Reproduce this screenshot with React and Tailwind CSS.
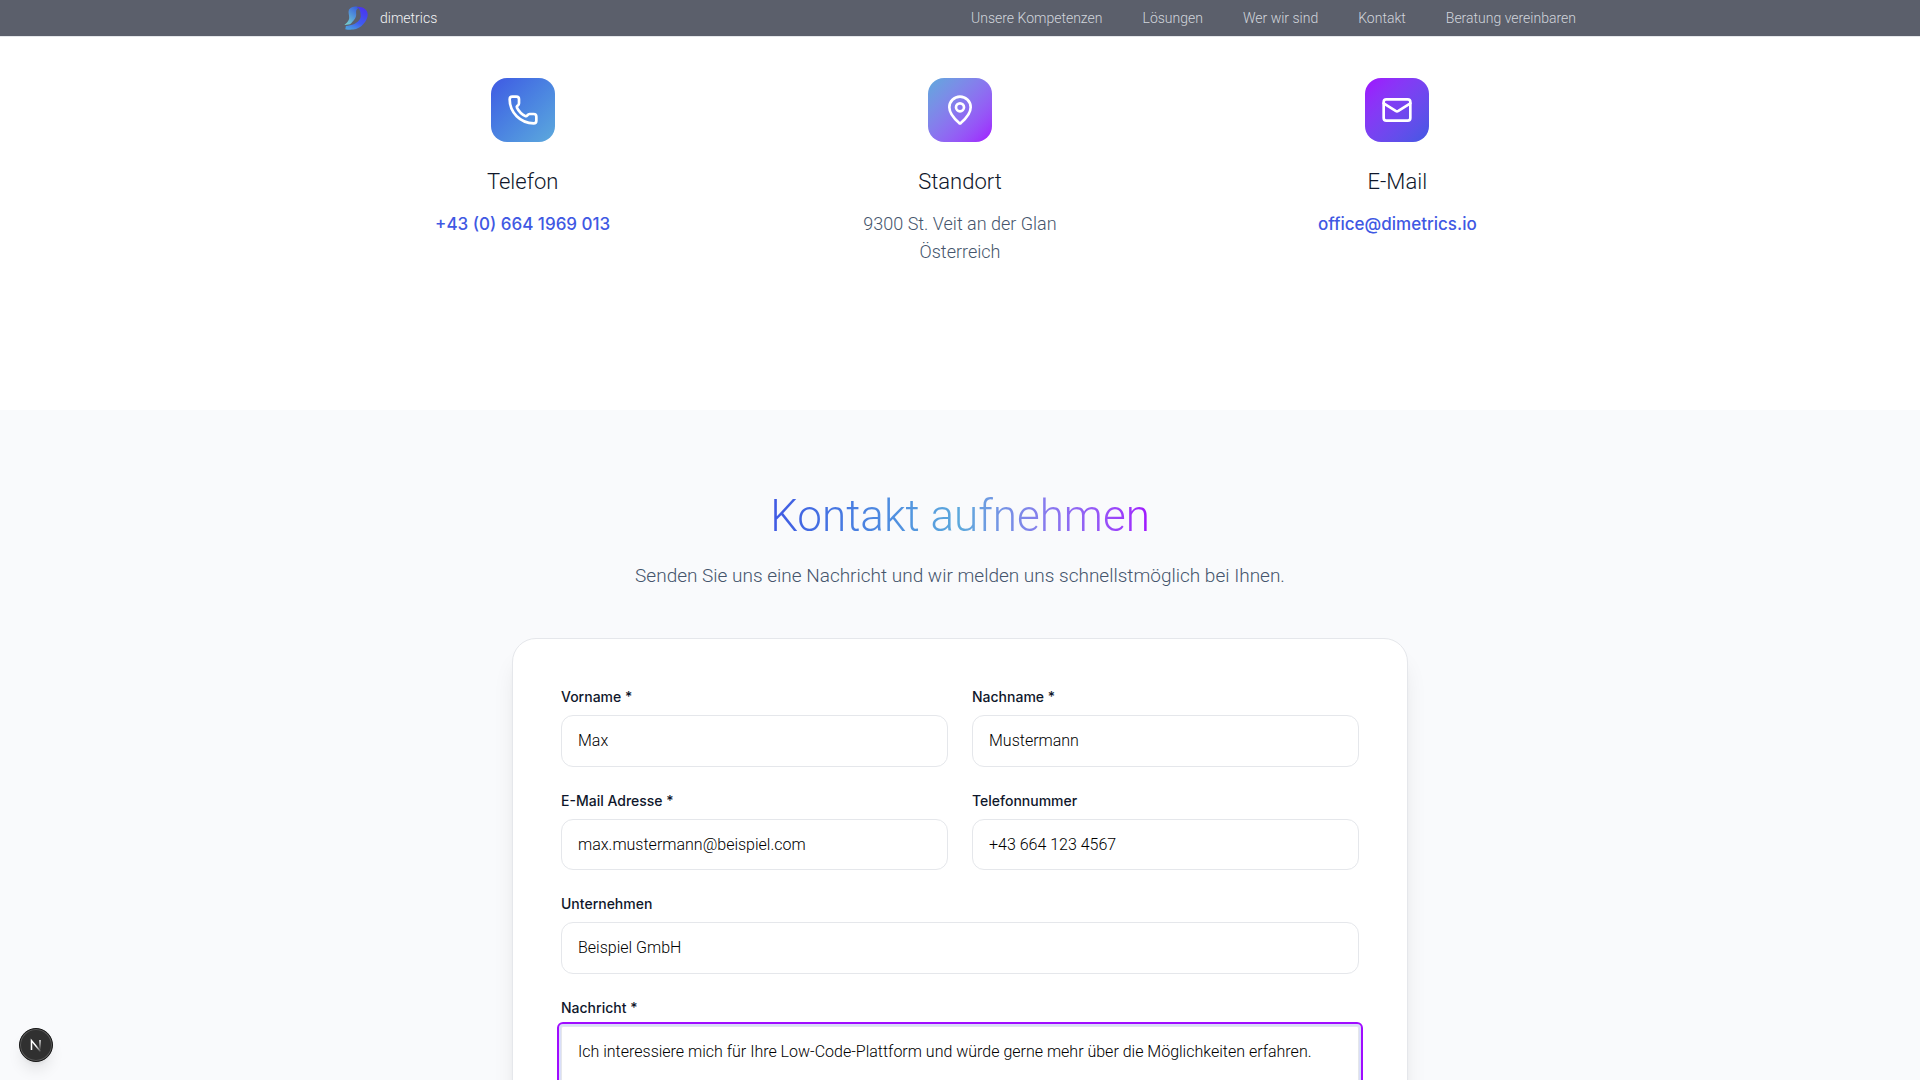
import { useId } from "react";
import { Mail, MapPin, Phone } from "lucide-react";

const navItems = [
  "Unsere Kompetenzen",
  "Lösungen",
  "Wer wir sind",
  "Kontakt",
  "Beratung vereinbaren",
];

function Logo() {
  return (
    <svg viewBox="0 0 24 24" className="size-6" aria-hidden="true">
      <defs>
        <linearGradient id="logo-right" x1="0.7" y1="0" x2="0.3" y2="1">
          <stop offset="0" stopColor="#4a33f0" />
          <stop offset="0.65" stopColor="#3f5cf0" />
          <stop offset="1" stopColor="#4a9be0" />
        </linearGradient>
        <linearGradient id="logo-left" x1="0.8" y1="0" x2="0.2" y2="1">
          <stop offset="0" stopColor="#3a62dc" />
          <stop offset="0.5" stopColor="#5599d8" />
          <stop offset="1" stopColor="#76d0d0" />
        </linearGradient>
      </defs>
      <path
        d="M5 3.400C7 1.200 10 .1 13.400.7L14 2.400C11.500 3.800 12.200 6 12.200 8.200c0 4.300-2.800 6.300-4.700 8.700L6 18.200.5 18.900C2 17.300 4.900 15.600 5.200 12 5.400 9 3.800 6.500 5 3.400z"
        fill="url(#logo-left)"
      />
      <path
        d="M12.700.8C18.500.5 23.500 3.300 23.700 8.200c.2 6.500-6.700 14.600-14.500 15.400-2.800.3-5.800.2-7.900-.4l.6-3.300c2.700-.6 5.700-.5 8.500-2 3-1.600 6.400-4.500 6.300-7.700C16.600 6.500 16.400 3.200 12.700.8z"
        fill="url(#logo-right)"
      />
    </svg>
  );
}

function ContactItem({ title, tile, icon: Icon, children }) {
  return (
    <div className="flex flex-col items-center text-center">
      <div className={`flex size-16 items-center justify-center rounded-2xl bg-linear-to-br ${tile}`}>
        <Icon className="size-8 text-white" strokeWidth={2} aria-hidden="true" />
      </div>
      <h3 className="mt-6 mb-3 text-[22px] leading-8 font-light text-slate-900">{title}</h3>
      <div className="text-lg leading-7 font-light text-slate-600">{children}</div>
    </div>
  );
}

function ContactLink({ href, children }) {
  return (
    <a href={href} className="font-['Inter',sans-serif] text-[17px] font-medium text-[#4058e3]">
      {children}
    </a>
  );
}

function Label({ htmlFor, children }) {
  return (
    <label
      htmlFor={htmlFor}
      className="mb-2 block font-['Inter',sans-serif] text-sm font-medium text-slate-900"
    >
      {children}
    </label>
  );
}

function Field({ label, value, type = "text", className = "" }) {
  const id = useId();
  return (
    <div className={className}>
      <Label htmlFor={id}>{label}</Label>
      <input
        id={id}
        type={type}
        defaultValue={value}
        className="block w-full rounded-xl border border-gray-200 bg-white px-4 py-3 text-base leading-[1.6] font-light text-black"
      />
    </div>
  );
}

export default function App() {
  return (
    <div className="min-h-screen bg-white font-['Roboto',sans-serif] font-light antialiased">
      <header className="sticky top-0 z-10 border-b border-gray-200 bg-[#5b5f6b]">
        <div className="mx-auto flex h-9 max-w-7xl items-center justify-between px-6">
          <a href="#start" className="flex items-center gap-3 text-sm font-light text-gray-100">
            <Logo />
            dimetrics
          </a>
          <nav className="flex gap-10 text-sm text-gray-300">
            {navItems.map((item) => (
              <a key={item} href="#kontakt">
                {item}
              </a>
            ))}
          </nav>
        </div>
      </header>

      <section className="mx-auto grid max-w-7xl grid-cols-3 gap-20 px-6 pt-[41px] pb-36">
        <ContactItem title="Telefon" tile="from-[#4058e3] to-[#5da9dc]" icon={Phone}>
          <ContactLink href="tel:+436641969013">+43 (0) 664 1969 013</ContactLink>
        </ContactItem>
        <ContactItem title="Standort" tile="from-[#5da9dc] to-[#a00cff]" icon={MapPin}>
          9300 St. Veit an der Glan
          <br />
          Österreich
        </ContactItem>
        <ContactItem title="E-Mail" tile="from-[#a00cff] to-[#4058e3]" icon={Mail}>
          <ContactLink href="mailto:office@dimetrics.io">office@dimetrics.io</ContactLink>
        </ContactItem>
      </section>

      <section id="kontakt" className="bg-[#f9fafc] px-6 py-20">
        <h2 className="mx-auto w-fit bg-linear-to-r from-[#4058e3] via-[#5da9dc] to-[#a00cff] bg-clip-text text-center text-[44px] leading-[52px] font-light text-transparent">
          Kontakt aufnehmen
        </h2>
        <p className="mt-4 mb-11 text-center text-[19px] leading-9 font-light text-slate-600">
          Senden Sie uns eine Nachricht und wir melden uns schnellstmöglich bei Ihnen.
        </p>
        <form className="mx-auto grid max-w-4xl grid-cols-2 gap-6 rounded-3xl border border-gray-200 bg-white p-12 shadow-xl">
          <Field label="Vorname *" value="Max" />
          <Field label="Nachname *" value="Mustermann" />
          <Field label="E-Mail Adresse *" value="max.mustermann@beispiel.com" type="email" />
          <Field label="Telefonnummer" value="+43 664 123 4567" type="tel" />
          <Field label="Unternehmen" value="Beispiel GmbH" className="col-span-2" />
          <div className="col-span-2">
            <Label htmlFor="nachricht">Nachricht *</Label>
            <textarea
              id="nachricht"
              rows={6}
              defaultValue="Ich interessiere mich für Ihre Low-Code-Plattform und würde gerne mehr über die Möglichkeiten erfahren."
              className="block w-full resize-none rounded-xs border border-gray-200 bg-white px-4 py-3 text-base leading-[1.6] font-light text-black ring-2 ring-[#4058e3]/20 outline-2 outline-offset-2 outline-[#a00cff]"
            />
          </div>
        </form>
      </section>

      <button
        type="button"
        aria-label="Entwicklerwerkzeuge"
        className="fixed bottom-[18px] left-[19px] z-20 flex size-[34px] items-center justify-center rounded-full border border-neutral-900 bg-[#303030] shadow-lg ring-1 ring-neutral-500/60 ring-inset"
      >
        <svg viewBox="0 0 16 16" className="size-4" fill="none" aria-hidden="true">
          <defs>
            <linearGradient id="n-right" x1="0" y1="0" x2="0" y2="1">
              <stop offset="0" stopColor="white" />
              <stop offset="1" stopColor="white" stopOpacity="0" />
            </linearGradient>
            <linearGradient id="n-diagonal" x1="0" y1="0" x2="1" y2="1">
              <stop offset="0.5" stopColor="white" />
              <stop offset="1" stopColor="white" stopOpacity="0.1" />
            </linearGradient>
          </defs>
          <path d="M3.500 13V3.500L12.500 14.500" stroke="url(#n-diagonal)" strokeWidth="1.5" />
          <rect x="11.300" y="3" width="1.400" height="10" fill="url(#n-right)" />
        </svg>
      </button>
    </div>
  );
}
